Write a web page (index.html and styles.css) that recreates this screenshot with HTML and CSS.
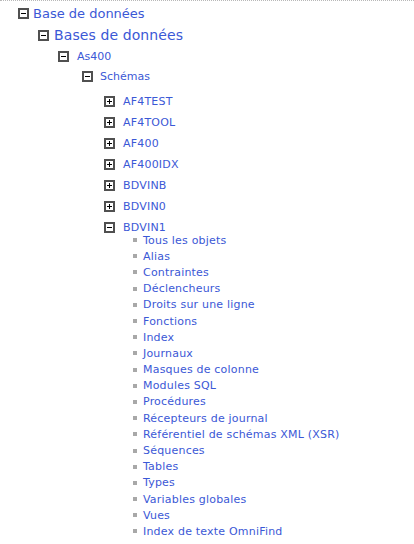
FILE: index.html
```html
<!DOCTYPE html>
<html>
<head>
    <title>Base de données</title>
    <link rel="stylesheet" href="styles.css">
</head>
<body>
    <div class="arbre">
        <div class="noeud n1">
            <span class="plie moins"></span><a href="#">Base de données</a>
        </div>
        <div class="noeud n2">
            <span class="plie moins"></span><a href="#">Bases de données</a>
        </div>
        <div class="noeud n3">
            <span class="plie moins"></span><a href="#">As400</a>
        </div>
        <div class="noeud n4">
            <span class="plie moins"></span><a href="#">Schémas</a>
        </div>
        <div class="schemas">
            <div class="noeud n5"><span class="plie plus"></span><a href="#">AF4TEST</a></div>
            <div class="noeud n5"><span class="plie plus"></span><a href="#">AF4TOOL</a></div>
            <div class="noeud n5"><span class="plie plus"></span><a href="#">AF400</a></div>
            <div class="noeud n5"><span class="plie plus"></span><a href="#">AF400IDX</a></div>
            <div class="noeud n5"><span class="plie plus"></span><a href="#">BDVINB</a></div>
            <div class="noeud n5"><span class="plie plus"></span><a href="#">BDVIN0</a></div>
            <div class="noeud n5"><span class="plie moins"></span><a href="#">BDVIN1</a></div>
        </div>
        <ul class="objets">
            <li><a href="#">Tous les objets</a></li>
            <li><a href="#">Alias</a></li>
            <li><a href="#">Contraintes</a></li>
            <li><a href="#">Déclencheurs</a></li>
            <li><a href="#">Droits sur une ligne</a></li>
            <li><a href="#">Fonctions</a></li>
            <li><a href="#">Index</a></li>
            <li><a href="#">Journaux</a></li>
            <li><a href="#">Masques de colonne</a></li>
            <li><a href="#">Modules SQL</a></li>
            <li><a href="#">Procédures</a></li>
            <li><a href="#">Récepteurs de journal</a></li>
            <li><a href="#">Référentiel de schémas XML (XSR)</a></li>
            <li><a href="#">Séquences</a></li>
            <li><a href="#">Tables</a></li>
            <li><a href="#">Types</a></li>
            <li><a href="#">Variables globales</a></li>
            <li><a href="#">Vues</a></li>
            <li><a href="#">Index de texte OmniFind</a></li>
        </ul>
    </div>
</body>
</html>
```
FILE: styles.css
```css
body {
    margin: 0;
    background: #fff;
    border-top: 1px dotted #b8b8b8;
    font-family: "DejaVu Sans", Verdana, sans-serif;
}
.arbre {
    padding-top: 1px;
}
a {
    color: #3b58d6;
    text-decoration: none;
}
.noeud {
    display: flex;
    align-items: center;
}
.plie {
    flex: none;
    width: 7px;
    height: 7px;
    border: 2px solid #505050;
    background: #fff;
    position: relative;
}
.plie::before {
    content: "";
    position: absolute;
    left: 1px;
    top: 3px;
    width: 5px;
    height: 1px;
    background: #000;
}
.plus::after {
    content: "";
    position: absolute;
    left: 3px;
    top: 1px;
    width: 1px;
    height: 5px;
    background: #000;
}
.n1 {
    height: 22px;
    padding-left: 18px;
    font-size: 13px;
}
.n1 .plie { margin-right: 4px; }
.n2 {
    height: 22px;
    padding-left: 38px;
    font-size: 14px;
    letter-spacing: 0.1px;
}
.n2 .plie { margin-right: 5px; }
.n3 {
    height: 20px;
    padding-left: 58px;
    font-size: 11px;
}
.n3 .plie { margin-right: 8px; }
.n4 {
    height: 20px;
    padding-left: 82px;
    font-size: 11px;
}
.n4 .plie { margin-right: 7px; }
.n5 {
    height: 12px;
    margin-top: 9px;
    padding-left: 104px;
    font-size: 11px;
    letter-spacing: 0.2px;
}
.n5 .plie { margin-right: 8px; }
.objets {
    list-style: none;
    margin: -1px 0 0 0;
    padding: 0 0 0 133px;
    font-size: 11px;
    letter-spacing: 0.2px;
}
.objets li {
    display: flex;
    align-items: center;
    height: 16.2px;
}
.objets li::before {
    content: "";
    flex: none;
    width: 4px;
    height: 4px;
    margin-right: 6px;
    background: #a8a8a8;
}
```
